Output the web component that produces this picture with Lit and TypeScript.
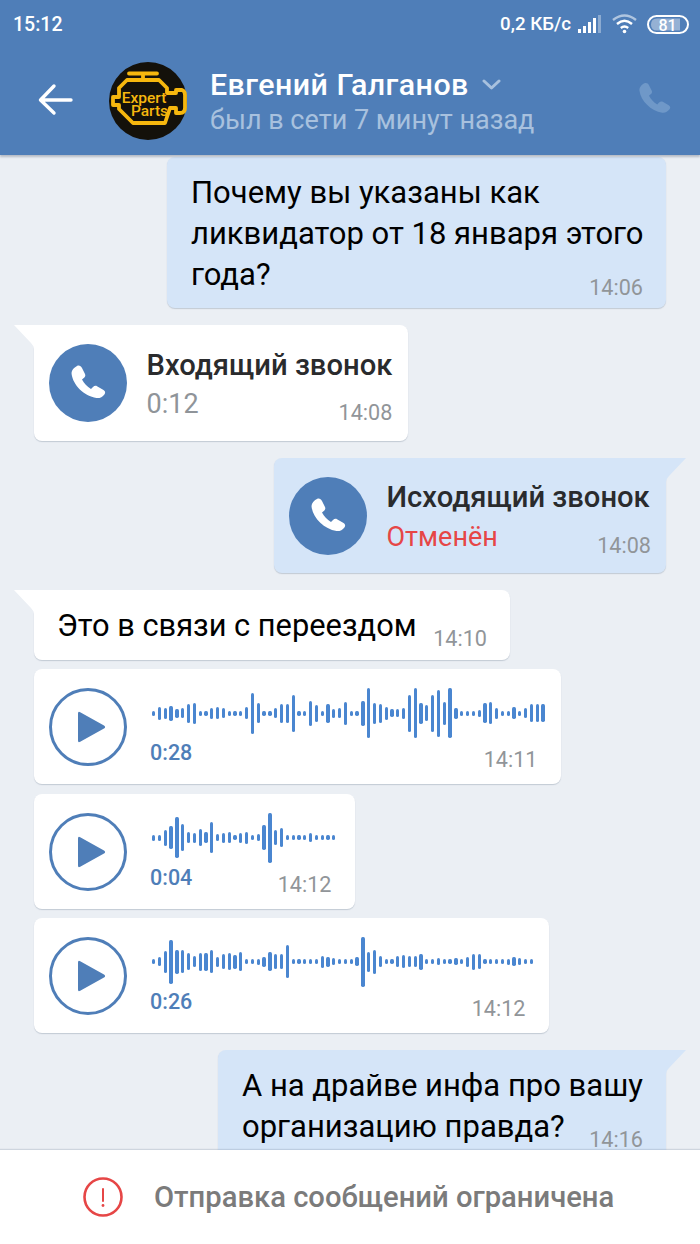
import { LitElement, html, css, svg } from "lit";
import { customElement } from "lit/decorators.js";

const PHONE = svg`<path d="M28 22C30 21 32 22 33 24L36 30C36.8 31.6 36 33 34.8 34L33 35.5C35 39.5 38 42.5 42 45L44 43C45.2 41.8 46.8 41.4 48 42.2L54.5 46C56.4 47.2 56.6 49 55.4 50.4C53.5 52.8 50.5 54.5 47.5 54C35 52 24 41 22.6 30C22.2 26.5 25 23.5 28 22Z"/>`;

const WAVE1 = [5,13,11,15,9,10,19,21,5,5,11,12,10,5,5,5,12,41,20,5,5,10,19,19,37,5,5,25,17,5,19,9,10,23,5,5,25,50,21,19,13,8,8,11,37,50,21,16,37,47,23,50,11,5,5,5,7,20,22,11,5,5,12,5,10,18,18,18];
const WAVE2 = [6,6,16,23,41,27,11,10,17,11,31,7,10,11,5,10,12,5,7,25,50,15,19,5,5,5,5,9,5,5,5,5];
const WAVE3 = [5,9,22,44,24,23,17,11,18,18,23,10,15,17,14,19,5,5,6,10,19,15,15,33,5,5,5,5,5,12,10,7,5,5,5,9,50,20,24,11,5,5,11,13,11,11,16,5,5,7,5,5,7,5,10,16,15,5,5,5,5,6,9,7,5,5];

@customElement("app-root")
export class AppRoot extends LitElement {
  static styles = css`
    :host {
      display: flex;
      flex-direction: column;
      width: 700px;
      height: 1244px;
      overflow: hidden;
      background: #ebeff4;
      font-family: Roboto, "Noto Sans", sans-serif;
    }
    header {
      flex: none;
      height: 155px;
      background: #4f7eb8;
      color: #fff;
      box-shadow: 0 2px 2px rgba(60, 70, 90, 0.3);
      position: relative;
      z-index: 2;
    }
    .status {
      height: 48px;
      display: flex;
      align-items: center;
      padding: 0 11px 0 13px;
      font-size: 19.5px;
      font-weight: 500;
    }
    .status .clock { flex: 1; }
    .status .net { font-size: 18.7px; margin-right: 7px; }
    .status .wifi { margin: 0 10px 0 10px; }
    .nav {
      height: 107px;
      display: flex;
      align-items: flex-start;
    }
    .back { margin: 33px 0 0 38px; flex: none; }
    .avatar { margin: 14px 0 0 36px; flex: none; }
    .who { margin: 18px 0 0 23px; flex: 1; }
    .name {
      font-size: 30.4px;
      font-weight: 500;
      line-height: 38px;
      display: flex;
      align-items: center;
      gap: 13px;
      letter-spacing: 0.45px;
    }
    .sub { font-size: 27px; line-height: 36px; color: #a8c1de; margin-top: -2px; }
    .call { margin: 32px 29px 0 0; flex: none; fill: #6f98c8; }

    main {
      flex: 1;
      min-height: 0;
      overflow: hidden;
      padding-top: 2px;
      display: flex;
      flex-direction: column;
    }
    .msg {
      flex: none;
      box-sizing: border-box;
      position: relative;
      border-radius: 8px;
      background: #fff;
      box-shadow: 0 1px 1px rgba(120, 135, 155, 0.35);
      margin-left: 34px;
      margin-bottom: 17px;
      color: #000;
    }
    .msg.tight { margin-bottom: 9.33px; }
    .msg.out {
      background: #d5e5f8;
      margin-left: auto;
      margin-right: 34px;
    }
    .tail { position: absolute; top: 0; left: -20px; fill: #fff; }
    .tail.r { left: auto; right: -20px; fill: #d5e5f8; }
    .msg.tailed-in { border-top-left-radius: 0; }
    .msg.tailed-out { border-top-right-radius: 0; }

    .text {
      height: 151px;
      padding: 15px 20px 0 24px;
      font-size: 31px;
      line-height: 41px;
    }
    .time { font-size: 21.6px; line-height: 26px; color: #919599; flex: none; }
    .text .time { float: right; margin: 21px 3px 0 0; }
    .one {
      display: flex;
      padding: 15px 23px 0 23px;
      height: 70px;
      box-sizing: border-box;
      font-size: 30.8px;
      line-height: 41px;
      justify-content: space-between;
    }
    .one .time { margin-top: 21px; }

    .callrow { display: flex; padding: 19px 16px 0 15px; height: 115.5px; box-sizing: border-box; }
    .badge { flex: none; width: 78px; height: 78px; border-radius: 50%; background: #4f7eb8; fill: #fff; }
    .callbody { flex: 1; margin-left: 19.5px; }
    .ctitle { font-size: 29.2px; font-weight: 500; line-height: 38px; color: #2a2b2d; margin-top: 1.5px; white-space: nowrap; }
    .cline { display: flex; justify-content: space-between; align-items: flex-end; margin-top: 3.5px; }
    .cdur { font-size: 27px; line-height: 34px; color: #8f9499; }
    .cdur.red { font-size: 27px; color: #e64646; }
    .cline .time { margin-bottom: -5px; }
    .out .cline { margin-right: -1px; }

    .voice { display: flex; padding: 19px 0 0 15px; height: 115px; box-sizing: border-box; }
    .play { flex: none; width: 78px; height: 78px; }
    .vbody { flex: 1; min-width: 0; margin-left: 23px; padding-right: 23.5px; }
    .wave { display: flex; align-items: center; gap: 2.53px; height: 50px; margin-left: 2px; }
    .bar { width: 3.3px; border-radius: 1.65px; background: #4a86d0; flex: none; }
    .vline { display: flex; justify-content: space-between; align-items: flex-start; margin-top: 2px; }
    .vdur { font-size: 21.5px; font-weight: 500; line-height: 26px; color: #4f7eb8; }
    .vline .time { margin-top: 7px; }

    footer {
      flex: none;
      height: 94px;
      background: #fff;
      box-shadow: 0 -1px 1px rgba(120, 135, 155, 0.25);
      position: relative;
      display: flex;
      align-items: center;
      padding-left: 83px;
      gap: 31px;
      font-size: 29.2px;
      font-weight: 500;
      color: #7b7b7b;
    }
  `;

  private wave(bars: number[]) {
    return html`<div class="wave">${bars.map((h) => html`<span class="bar" style="height:${h}px"></span>`)}</div>`;
  }

  private tail(out = false) {
    return out
      ? html`<svg class="tail r" width="20" height="24" viewBox="0 0 20 24"><path d="M0 0H20L3 18Q0 21 0 24Z"/></svg>`
      : html`<svg class="tail" width="20" height="24" viewBox="0 0 20 24"><path d="M20 0H0L17 18Q20 21 20 24Z"/></svg>`;
  }

  private voice(bars: number[], dur: string, time: string, width: number, tight = true) {
    return html`<div class="msg voice ${tight ? "tight" : ""}" style="width:${width}px">
      <svg class="play" viewBox="0 0 78 78">
        <circle cx="39" cy="39" r="37.5" fill="none" stroke="#4f7eb8" stroke-width="3"/>
        <path d="M29 25.5Q29 23 31.2 24.3L55 37.4Q57.2 39 55 40.6L31.2 53.7Q29 55 29 52.5Z" fill="#4f7eb8"/>
      </svg>
      <div class="vbody">
        ${this.wave(bars)}
        <div class="vline"><span class="vdur">${dur}</span><span class="time">${time}</span></div>
      </div>
    </div>`;
  }

  render() {
    return html`
      <header>
        <div class="status">
          <span class="clock">15:12</span>
          <span class="net">0,2 КБ/с</span>
          <svg width="24" height="18" viewBox="0 0 24 18" fill="#fff">
            <rect x="0" y="14" width="3" height="4"/><rect x="5" y="11" width="3" height="7"/>
            <rect x="10" y="7" width="3" height="11"/><rect x="15" y="3" width="3" height="15"/>
            <rect x="20" y="0" width="3" height="18" opacity=".35"/>
          </svg>
          <svg class="wifi" width="25" height="20" viewBox="0 0 25 20" fill="none" stroke="#fff" stroke-width="2.4">
            <path d="M1 6Q12.5 -3 24 6" opacity=".55"/>
            <path d="M5 10Q12.5 3.5 20 10"/>
            <path d="M8.8 14Q12.5 11 16.2 14"/>
            <circle cx="12.5" cy="17.5" r="1.8" fill="#fff" stroke="none"/>
          </svg>
          <svg width="42" height="19" viewBox="0 0 42 19">
            <rect x="1" y="1" width="40" height="17" rx="8.5" fill="none" stroke="#fff" stroke-width="2"/>
            <path d="M4 9.5Q4 3.5 10 3.5H33V15.5H10Q4 15.5 4 9.5Z" fill="#fff" opacity=".4"/>
            <text x="20.5" y="15.5" text-anchor="middle" font-size="16" font-weight="500" fill="#fff">81</text>
          </svg>
        </div>
        <div class="nav">
          <svg class="back" width="35" height="36" viewBox="0 0 35 36" fill="none" stroke="#fff" stroke-width="3.4" stroke-linecap="round" stroke-linejoin="round">
            <path d="M33 19H3M16 5L2.5 19L16 32"/>
          </svg>
          <svg class="avatar" width="78" height="78" viewBox="0 0 78 78">
            <circle cx="39" cy="39" r="39" fill="#14110a"/>
            <g fill="none" stroke="#f6b70e" stroke-width="3.8" stroke-linejoin="round" stroke-linecap="round">
              <path d="M20 11.5H48M34 11.5V18"/>
              <path d="M18 18H50L58 26V31H67V28H73Q76 29 76 33V46Q76 51 71 51H67V46H61L56 61H24L10 47V43H4V35H10V26Z"/>
            </g>
            <text x="35" y="41" text-anchor="middle" font-size="15.5" font-weight="500" fill="#f6b70e">Expert</text>
            <text x="40.5" y="54" text-anchor="middle" font-size="15.5" font-weight="500" fill="#f6b70e">Parts</text>
          </svg>
          <div class="who">
            <div class="name">Евгений Галганов
              <svg width="19" height="12" viewBox="0 0 19 12" fill="none" stroke="#a8c1de" stroke-width="3" stroke-linecap="round" stroke-linejoin="round"><path d="M2 2L9.5 9L17 2"/></svg>
            </div>
            <div class="sub">был в сети 7 минут назад</div>
          </div>
          <svg class="call" width="33" height="36" viewBox="21 20 36 36">${PHONE}</svg>
        </div>
      </header>

      <main>
        <div class="msg out text" style="width:499px">Почему вы указаны как ликвидатор от 18 января этого года?<span class="time">14:06</span></div>

        <div class="msg tailed-in callrow" style="width:374px">
          ${this.tail()}
          <svg class="badge" viewBox="0 0 78 78">${PHONE}</svg>
          <div class="callbody">
            <div class="ctitle">Входящий звонок</div>
            <div class="cline"><span class="cdur">0:12</span><span class="time">14:08</span></div>
          </div>
        </div>

        <div class="msg out tailed-out callrow" style="width:392px">
          ${this.tail(true)}
          <svg class="badge" viewBox="0 0 78 78">${PHONE}</svg>
          <div class="callbody">
            <div class="ctitle">Исходящий звонок</div>
            <div class="cline"><span class="cdur red">Отменён</span><span class="time">14:08</span></div>
          </div>
        </div>

        <div class="msg tailed-in one tight" style="width:476px">
          ${this.tail()}
          <span>Это в связи с переездом</span><span class="time">14:10</span>
        </div>

        ${this.voice(WAVE1, "0:28", "14:11", 527)}
        ${this.voice(WAVE2, "0:04", "14:12", 321)}
        ${this.voice(WAVE3, "0:26", "14:12", 515, false)}

        <div class="msg out tailed-out text" style="width:448px">
          ${this.tail(true)}
          А на драйве инфа про вашу организацию правда?<span class="time">14:16</span>
        </div>
      </main>

      <footer>
        <svg width="40" height="40" viewBox="0 0 40 40">
          <circle cx="20" cy="20" r="18.5" fill="none" stroke="#e64646" stroke-width="2.6"/>
          <rect x="19" y="11" width="2" height="14" rx="1" fill="#e64646"/>
          <circle cx="20" cy="28.5" r="1.4" fill="#e64646"/>
        </svg>
        <span>Отправка сообщений ограничена</span>
      </footer>
    `;
  }
}
